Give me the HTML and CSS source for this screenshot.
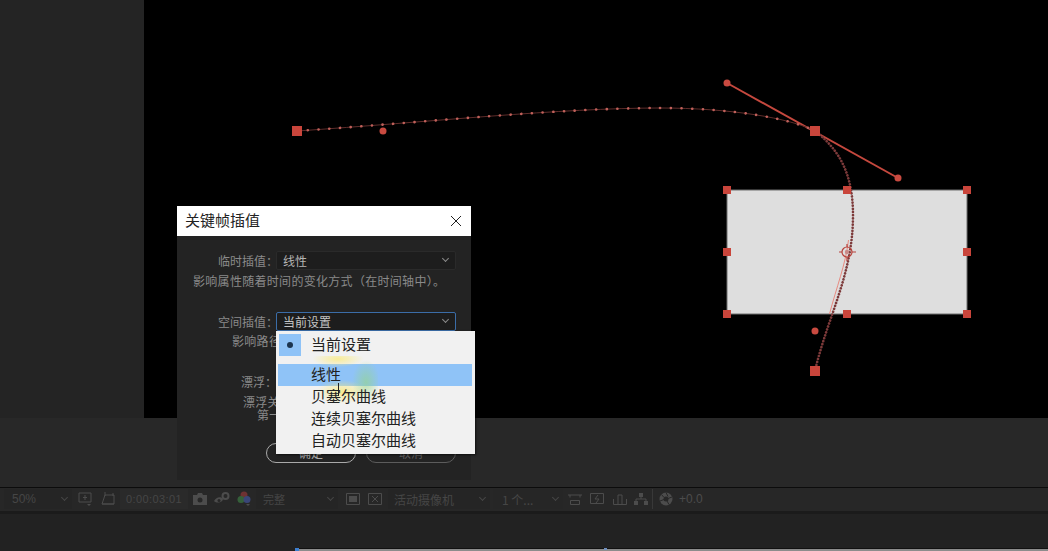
FILE: index.html
```html
<!DOCTYPE html>
<html lang="zh-CN">

<head>
    <meta charset="UTF-8">
    <title>关键帧插值</title>
    <link rel="stylesheet" href="styles.css">
</head>

<body>
    <div id="app">
        <div id="main">
            <div id="sidePanel"></div>
            <div id="viewer">
                <svg id="stage" width="904" height="418" viewBox="144 0 904 418">
                    <rect class="layer" x="727" y="190" width="240" height="124" />
                    <line class="tangent" x1="727" y1="83" x2="898" y2="178" />
                    <path class="path-line" d="M297 131C430 122 560 108 660 108C730 108 790 118 815 131" />
                    <path class="path-dots" d="M297 131C430 122 560 108 660 108C730 108 790 118 815 131" />
                    <path class="path-pink" d="M850 240C847 265 838 287 831 314" />
                    <path class="path-dots dense" d="M815 131C840 150 853 175 853 215C853 275 828 315 815 371" />
                    <circle class="dot" cx="727" cy="83" r="3.5" />
                    <circle class="dot" cx="898" cy="178" r="3.5" />
                    <circle class="dot" cx="383" cy="131" r="3.5" />
                    <circle class="dot" cx="815" cy="331" r="3.5" />
                    <rect class="handle" x="292" y="126" width="10" height="10" />
                    <rect class="handle" x="810" y="126" width="10" height="10" />
                    <rect class="handle" x="810" y="366" width="10" height="10" />
                    <rect class="handle" x="723" y="186" width="8" height="8" />
                    <rect class="handle" x="843" y="186" width="8" height="8" />
                    <rect class="handle" x="963" y="186" width="8" height="8" />
                    <rect class="handle" x="723" y="248" width="8" height="8" />
                    <rect class="handle" x="963" y="248" width="8" height="8" />
                    <rect class="handle" x="723" y="310" width="8" height="8" />
                    <rect class="handle" x="843" y="310" width="8" height="8" />
                    <rect class="handle" x="963" y="310" width="8" height="8" />
                    <g class="anchor">
                        <circle cx="847" cy="252" r="5" />
                        <circle class="inner" cx="847" cy="252" r="2.2" />
                        <path d="M839 252h3M852 252h4M847 244v3M847 257v4" />
                    </g>
                </svg>
            </div>
        </div>

        <div id="gap"></div>

        <div id="toolbar">
            <div class="select zoom-select"><span>50%</span><i class="arrow"></i></div>
            <svg class="tool m6" width="14" height="16" viewBox="0 0 14 16"><path d="M1 2h12v9H1zM7 4v5M5 6.500h4" /><path class="solid" d="M9 13h4l-2 2z" /></svg>
            <svg class="tool m9" width="14" height="16" viewBox="0 0 14 16"><path d="M4 4h9v9H1zM4 1v4M12 2v3M1 13h12" /></svg>
            <div class="time m5">0:00:03:01</div>
            <svg class="tool m5" width="14" height="16" viewBox="0 0 14 16"><path class="solid" d="M0 4h4l1-2h4l1 2h4v10H0z" /><circle class="hole" cx="7" cy="9" r="2.500" /></svg>
            <svg class="tool m7" width="16" height="16" viewBox="0 0 16 16"><path class="solid" d="M0 10c2-4 7-5 9-2 0 3-6 5-9 2z" /><circle class="hole" cx="5" cy="9.500" r="1.500" /><circle class="thick" cx="11.500" cy="5" r="3" /></svg>
            <svg class="tool m7" width="14" height="16" viewBox="0 0 14 16">
                <circle class="c-red" cx="7" cy="4" r="3.500" />
                <circle class="c-green" cx="4" cy="8.500" r="3.500" />
                <circle class="c-blue" cx="10" cy="8.500" r="3.500" />
                <path class="c-tip" d="M9 13h4l-2 2z" />
            </svg>
            <div class="select full-select m5"><span>完整</span><i class="arrow"></i></div>
            <svg class="tool m8" width="14" height="16" viewBox="0 0 14 16"><path d="M.5 2.500h13v11H.5z" /><path class="solid" d="M3 5h8v6H3z" /></svg>
            <svg class="tool m8" width="14" height="16" viewBox="0 0 14 16"><path d="M.5 2.500h13v11H.5zM4 5l6 6M10 5l-6 6" /></svg>
            <div class="select camera-select m6"><span>活动摄像机</span><i class="arrow"></i></div>
            <div class="select view-select m3"><span>1 个...</span><i class="arrow"></i></div>
            <svg class="tool m5" width="14" height="16" viewBox="0 0 14 16"><path d="M0 4h14M2 6.500V4M12 6.500V4M2.500 9.500h9v4h-9z" /></svg>
            <svg class="tool m8" width="14" height="16" viewBox="0 0 14 16"><path d="M.5 2.500h13v10H.5zM8 4L5 8h4l-3 4" /></svg>
            <svg class="tool m9" width="14" height="16" viewBox="0 0 14 16"><path d="M.5 8v5.500h13V8M5 13V4h4v9" /></svg>
            <svg class="tool m7" width="14" height="16" viewBox="0 0 14 16"><path class="solid" d="M5 2h4v4H5zM0 10h4v4H0zM10 10h4v4h-4z" /><path d="M7 6v2H2v2M7 8h5v2" /></svg>
            <div class="divider m4"></div>
            <svg class="tool m6" width="14" height="16" viewBox="0 0 14 16"><circle class="solid" cx="7" cy="8" r="6.500" /><circle class="hole" cx="7" cy="8" r="2.500" /><path class="cut" d="M7 1.500l2 4M13 6l-4 1.500M10 13.500L8 10M1 10l4-1.500M2.500 3.500L5 6.500" /></svg>
            <div class="exposure m6">+0.0</div>
        </div>

        <div id="lower"></div>
        <div id="timeline">
            <i class="blank"></i>
            <i class="playhead"></i>
            <i class="track"></i>
            <i class="tick"></i>
        </div>
    </div>

    <div id="dialog">
        <div class="title-bar">
            <span>关键帧插值</span>
            <svg width="12" height="12" viewBox="0 0 12 12"><path d="M1 1l10 10M11 1L1 11" /></svg>
        </div>
        <div class="dialog-body">
            <div class="field">
                <label>临时插值：</label>
                <div class="combo"><span>线性</span><i class="arrow"></i></div>
            </div>
            <p class="hint first">影响属性随着时间的变化方式（在时间轴中）。</p>
            <div class="field second">
                <label>空间插值：</label>
                <div class="combo focus"><span>当前设置</span><i class="arrow"></i></div>
            </div>
            <p class="hint path-hint">影响路径</p>
            <div class="field third">
                <label class="short">漂浮：</label>
            </div>
            <p class="hint float-hint">漂浮关</p>
            <p class="hint float-hint two">第一</p>
            <div class="buttons">
                <div class="btn ok">确定</div>
                <div class="btn">取消</div>
            </div>
        </div>
    </div>

    <ul id="menu">
        <li class="checked"><b class="check"><i></i></b><span>当前设置</span></li>
        <li class="active"><span>线性</span></li>
        <li><span>贝塞尔曲线</span></li>
        <li><span>连续贝塞尔曲线</span></li>
        <li><span>自动贝塞尔曲线</span></li>
        <i class="cursor"></i>
    </ul>
</body>

</html>
```

FILE: styles.css
```css
* {
    margin: 0;
    padding: 0;
    box-sizing: border-box;
}

html,
body {
    width: 1048px;
    height: 551px;
    overflow: hidden;
    background-color: #262626;
    font-family: "Noto Sans CJK SC", "Liberation Sans", sans-serif;
}

ul li {
    list-style: none;
}

#app {
    display: flex;
    flex-direction: column;
    height: 551px;
}

#main {
    display: flex;
    height: 418px;
}

#sidePanel {
    width: 144px;
    background-color: #242424;
}

#viewer {
    flex: 1;
    background-color: #000;
}

#stage {
    display: block;
}

.layer {
    fill: #dedede;
    stroke: #6e6e6e;
    stroke-width: 1;
}

.tangent {
    stroke: #c5483e;
    stroke-width: 2;
}

.path-line {
    fill: none;
    stroke: #5e2c2a;
    stroke-width: 1;
}

.path-dots {
    fill: none;
    stroke: #c0605a;
    stroke-width: 2.6;
    stroke-linecap: round;
    stroke-dasharray: 0.1 10.6;
}

.path-pink {
    fill: none;
    stroke: #e88a80;
    stroke-width: 1;
    transform: translateX(-1.5px);
}

.path-dots.dense {
    stroke: #7d3a3a;
    stroke-width: 2.6;
    stroke-dasharray: 0.1 3;
}

.dot {
    fill: #c94a40;
}

.handle {
    fill: #c9453b;
}

.anchor circle,
.anchor path {
    fill: none;
    stroke: #b8433c;
    stroke-width: 1.2;
}

.anchor .inner {
    fill: #c98a88;
    stroke: none;
}

#gap {
    height: 70px;
    background-color: #282828;
    border-bottom: 1px solid #0c0c0c;
}

#toolbar {
    display: flex;
    align-items: center;
    height: 26px;
    padding: 1px 4px 2px;
    background-color: #272727;
    border-bottom: 3px solid #1b1b1b;
    color: #464646;
    font-size: 11px;
}

.m3 { margin-left: 3px; }
.m4 { margin-left: 4px; }
.m5 { margin-left: 5px; }
.m6 { margin-left: 6px; }
.m7 { margin-left: 7px; }
.m8 { margin-left: 8px; }
.m9 { margin-left: 9px; }

.select {
    display: flex;
    align-items: center;
    justify-content: space-between;
    flex: none;
    height: 20px;
    padding: 0 4px 0 8px;
    background-color: #252525;
}

.zoom-select {
    width: 68px;
    font-family: "Liberation Sans", sans-serif;
    font-size: 12px;
}

.full-select {
    width: 82px;
    padding-left: 7px;
}

.camera-select {
    width: 102px;
    padding-left: 6px;
    font-size: 12px;
}

.view-select {
    width: 70px;
    background-color: #262626;
    padding-left: 9px;
    font-size: 12px;
}

.arrow {
    width: 5px;
    height: 5px;
    margin: -3px 1px 0 0;
    border-right: 1px solid currentColor;
    border-bottom: 1px solid currentColor;
    transform: rotate(45deg);
}

.tool {
    flex: none;
}

.tool path,
.tool circle {
    fill: none;
    stroke: #4c4c4c;
    stroke-width: 1;
}

.tool .solid {
    fill: #4c4c4c;
    stroke: none;
}

.tool .thick {
    stroke-width: 2;
}

.tool .hole {
    fill: #272727;
    stroke: none;
}

.tool .cut {
    stroke: #272727;
}

.tool .c-red {
    fill: #6e3232;
    stroke: none;
}

.tool .c-green {
    fill: #35603a;
    stroke: none;
}

.tool .c-blue {
    fill: #3a4678;
    stroke: none;
}

.tool .c-tip {
    fill: #4c4c4c;
    stroke: none;
}

.time {
    flex: none;
    width: 68px;
    height: 20px;
    line-height: 20px;
    text-align: center;
    background-color: #2a2a2a;
    font-family: "Liberation Sans", sans-serif;
    font-size: 11px;
    letter-spacing: .4px;
}

.divider {
    width: 1px;
    height: 20px;
    background-color: #383838;
}

.exposure {
    font-family: "Liberation Sans", sans-serif;
    font-size: 12px;
    color: #4c4c4c;
}

#lower {
    flex: 1;
    background-color: #222;
}

#timeline {
    position: relative;
    display: flex;
    height: 3px;
}

#timeline i {
    display: block;
}

.blank {
    width: 295px;
    background-color: #222;
}

.playhead {
    width: 4px;
    background-color: #3d7fd0;
}

.track {
    flex: 1;
    background-color: #8c8c8c;
    border-top: 1px solid #111;
}

#timeline .tick {
    position: absolute;
    left: 604px;
    top: 0;
    width: 3px;
    height: 2px;
    background-color: #6f8fbf;
}

/* 对话框 */
#dialog {
    position: absolute;
    left: 177px;
    top: 206px;
    width: 294px;
    height: 274px;
    background-color: #232323;
    color: #8a8a8a;
    font-size: 12px;
}

.title-bar {
    display: flex;
    align-items: center;
    justify-content: space-between;
    height: 30px;
    padding: 0 9px 0 8px;
    background-color: #fff;
    color: #222;
    font-size: 15px;
}

.title-bar span {
    margin-top: -3px;
}

.title-bar path {
    fill: none;
    stroke: #222;
    stroke-width: 1;
}

.dialog-body {
    display: flex;
    flex-direction: column;
    padding-top: 15px;
}

.field {
    display: flex;
    align-items: center;
    height: 19px;
}

.field label {
    flex: none;
    width: 99px;
    padding-left: 41px;
    white-space: nowrap;
}

.field label.short {
    padding-left: 64px;
}

.field.second {
    margin-top: 23px;
}

.field.third {
    margin-top: 23px;
}

.combo {
    position: relative;
    display: flex;
    align-items: center;
    justify-content: space-between;
    width: 180px;
    height: 19px;
    padding: 0 6px 1px;
    background-color: #1d1d1d;
    border: 1px solid #2a2a2a;
    border-radius: 2px;
    color: #b4b4b4;
}

.combo .arrow {
    color: #8a8a8a;
}

.combo.focus {
    border-color: #3b6da8;
    color: #c4c4c4;
}

.hint {
    line-height: 16px;
    letter-spacing: .3px;
}

.hint.first {
    padding-left: 16px;
    margin-top: 3px;
}

.path-hint {
    padding-left: 55px;
    margin-top: 2px;
}

.float-hint {
    padding-left: 66px;
    margin-top: 4px;
    height: 13px;
    line-height: 13px;
}

.float-hint.two {
    margin-top: 0;
    padding-left: 80px;
}

.buttons {
    display: flex;
    gap: 10px;
    padding-left: 89px;
    margin-top: 22px;
}

.btn {
    width: 90px;
    height: 20px;
    line-height: 18px;
    text-align: center;
    border: 1px solid #5c5c5c;
    border-radius: 10px;
    color: #5c5c5c;
}

.btn.ok {
    border-color: #a9a9a9;
    color: #a9a9a9;
}

/* 下拉菜单 */
#menu {
    position: absolute;
    left: 276px;
    top: 331px;
    width: 199px;
    height: 123px;
    background-color: #f1f1f1;
    color: #222;
    font-size: 15px;
    box-shadow: 1px 1px 2px rgba(0, 0, 0, .6);
    padding: 3px 3px 0 2px;
}

#menu li {
    position: relative;
    display: flex;
    align-items: center;
    height: 22px;
    padding: 0 0 3px 33px;
}

#menu li span {
    position: relative;
}

#menu li.checked {
    margin-bottom: 8px;
}

#menu li.active {
    background-color: #8fc3f7;
}

/* 录屏压缩留下的色块 */
#menu li.active::before {
    content: "";
    position: absolute;
    left: 30px;
    top: -8px;
    width: 70px;
    height: 50px;
    background:
        radial-gradient(ellipse 14px 22px at 58px 26px, rgba(150, 215, 130, .6), transparent),
        radial-gradient(ellipse 26px 8px at 30px 3px, rgba(250, 235, 130, .8), transparent),
        radial-gradient(ellipse 26px 12px at 34px 36px, rgba(250, 235, 120, .8), transparent);
}

.check {
    position: absolute;
    left: 1px;
    top: 0;
    width: 22px;
    height: 22px;
    display: flex;
    align-items: center;
    justify-content: center;
    background-color: #8fc3f7;
}

.check i {
    width: 6px;
    height: 6px;
    border-radius: 50%;
    background-color: #1c3550;
}

.cursor {
    position: absolute;
    left: 62px;
    top: 52px;
    width: 1px;
    height: 13px;
    background-color: #222;
}
```
